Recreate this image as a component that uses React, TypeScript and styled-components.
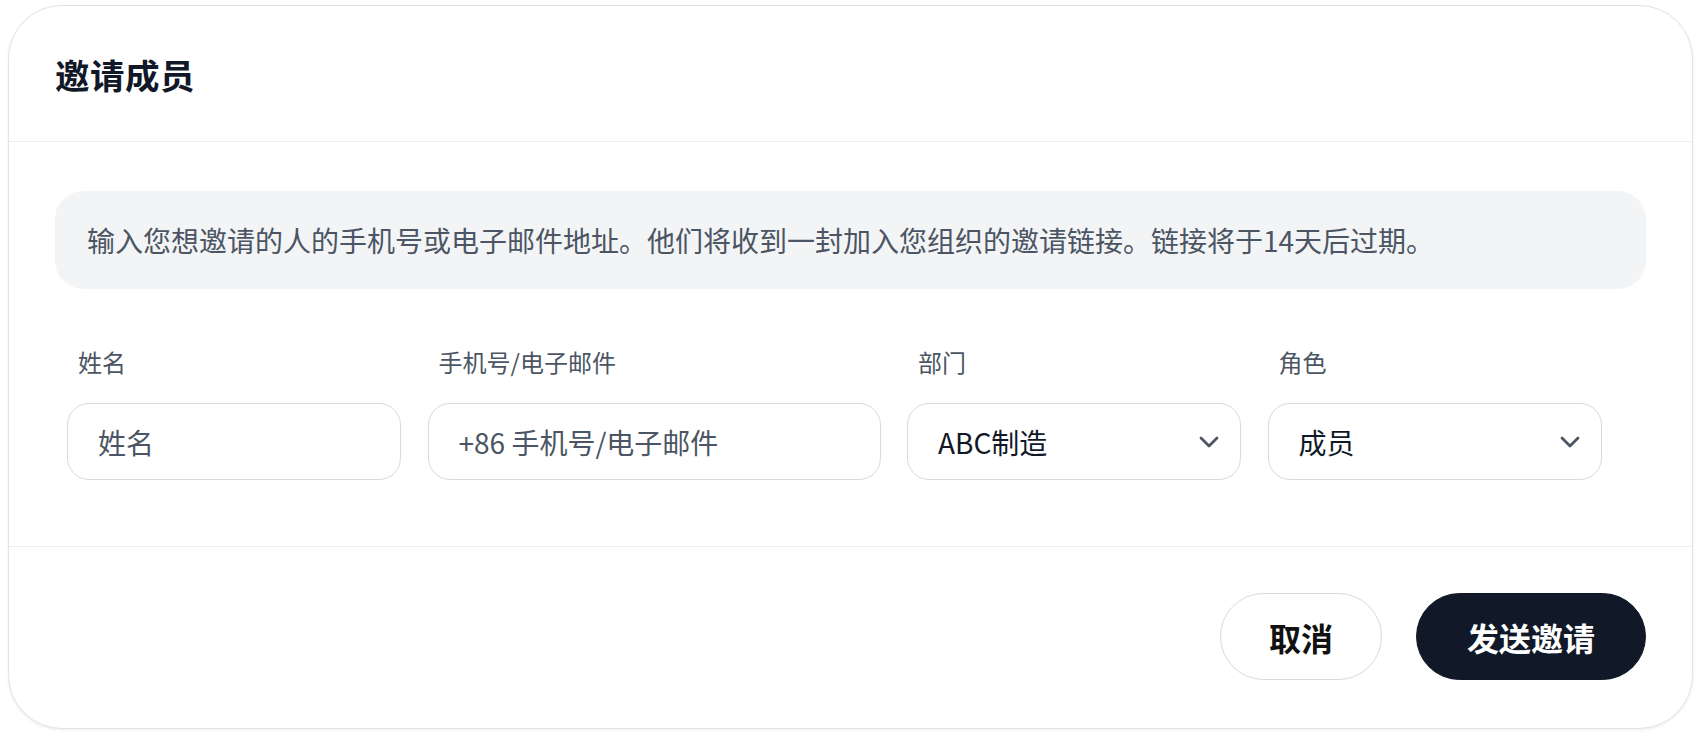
import React from 'react';
import styled, { createGlobalStyle } from 'styled-components';

const GlobalStyle = createGlobalStyle`
  html, body {
    margin: 0;
    padding: 0;
    background: #ffffff;
    font-family: "Noto Sans CJK SC", "Noto Sans", sans-serif;
  }
  * { box-sizing: border-box; }
`;

const Page = styled.div`
  padding: 5px 7px 8px 8px;
`;

const Card = styled.section`
  background: #ffffff;
  border: 1px solid #e3e3e3;
  border-radius: 54px;
  box-shadow: 0 1px 3px rgba(0, 0, 0, 0.07);
  overflow: hidden;
`;

const Header = styled.header`
  height: 136px;
  display: flex;
  align-items: center;
  padding: 0 46px;
  border-bottom: 1px solid #ececec;
`;

const Title = styled.h2`
  margin: 0;
  font-size: 34.5px;
  font-weight: 700;
  color: #111827;
  letter-spacing: 0.5px;
`;

const Body = styled.div`
  padding: 49px 46px 66px;
  border-bottom: 1px solid #ececec;
`;

const Notice = styled.p`
  margin: 0;
  height: 98px;
  display: flex;
  align-items: center;
  padding: 0 32px;
  background: #f3f4f6;
  border-radius: 28px;
  font-size: 28px;
  color: #4b5563;
`;

const Fields = styled.div`
  display: grid;
  grid-template-columns: 334px 453px 334px 334px;
  column-gap: 26.5px;
  margin: 56px 0 0 12px;
`;

const Field = styled.label`
  display: flex;
  flex-direction: column;
  gap: 24px;
`;

const Label = styled.span`
  padding-left: 11px;
  font-size: 24px;
  line-height: 34px;
  color: #4b5563;
`;

const Control = styled.div`
  height: 77px;
  display: flex;
  align-items: center;
  padding: 0 21px 0 30px;
  border: 1.5px solid #d9dadd;
  border-radius: 22px;
  background: #ffffff;
`;

const Input = styled.input`
  width: 100%;
  border: none;
  outline: none;
  padding: 0;
  background: transparent;
  font-family: inherit;
  font-size: 28px;
  color: #111827;
  &::placeholder {
    color: #4b5563;
  }
`;

const SelectValue = styled.span`
  flex: 1;
  font-size: 28px;
  color: #111827;
`;

const Chevron = styled.svg`
  width: 20px;
  height: 12px;
  color: #4b5563;
`;

const Footer = styled.footer`
  display: flex;
  justify-content: flex-end;
  gap: 34px;
  padding: 46px 46px 48px;
`;

const Button = styled.button<{ $primary?: boolean }>`
  height: 87px;
  padding: 0 ${p => (p.$primary ? '50px' : '48px')};
  border-radius: 44px;
  border: 1.5px solid ${p => (p.$primary ? '#111827' : '#d9dadd')};
  background: ${p => (p.$primary ? '#111827' : '#ffffff')};
  color: ${p => (p.$primary ? '#ffffff' : '#111111')};
  font-family: inherit;
  font-size: 32px;
  font-weight: 600;
  cursor: pointer;
`;

const ChevronDown = () => (
  <Chevron viewBox="0 0 20 12" fill="none" stroke="currentColor" strokeWidth="2.8" strokeLinecap="round" strokeLinejoin="round">
    <polyline points="2,2 10,10 18,2" />
  </Chevron>
);

export default function App() {
  return (
    <>
      <GlobalStyle />
      <Page>
        <Card>
          <Header>
            <Title>邀请成员</Title>
          </Header>
          <Body>
            <Notice>输入您想邀请的人的手机号或电子邮件地址。他们将收到一封加入您组织的邀请链接。链接将于14天后过期。</Notice>
            <Fields>
              <Field>
                <Label>姓名</Label>
                <Control>
                  <Input placeholder="姓名" />
                </Control>
              </Field>
              <Field>
                <Label>手机号/电子邮件</Label>
                <Control>
                  <Input placeholder="+86 手机号/电子邮件" />
                </Control>
              </Field>
              <Field>
                <Label>部门</Label>
                <Control>
                  <SelectValue>ABC制造</SelectValue>
                  <ChevronDown />
                </Control>
              </Field>
              <Field>
                <Label>角色</Label>
                <Control>
                  <SelectValue>成员</SelectValue>
                  <ChevronDown />
                </Control>
              </Field>
            </Fields>
          </Body>
          <Footer>
            <Button>取消</Button>
            <Button $primary>发送邀请</Button>
          </Footer>
        </Card>
      </Page>
    </>
  );
}
